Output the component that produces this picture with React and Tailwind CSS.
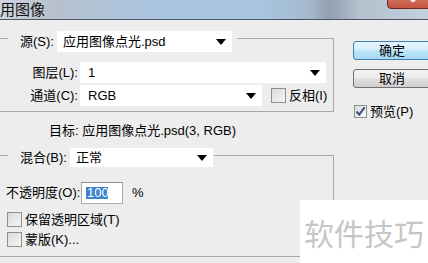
import React from "react";

function Arrow() {
  return (
    <svg width="10" height="6" viewBox="0 0 10 6" className="shrink-0">
      <path d="M0 0 L10 0 L5 6 Z" fill="#000" />
    </svg>
  );
}

function Dropdown({ value, className }) {
  return (
    <div className={"bg-white flex items-center justify-between pl-[6px] pr-[6px] text-[13px] leading-[16px] text-black " + className}>
      <span>{value}</span>
      <Arrow />
    </div>
  );
}

function Box({ className = "" }) {
  return (
    <div className={"w-[15px] h-[15px] border border-[#8e8f8f] bg-[linear-gradient(135deg,#d9d9d9,#f7f7f7)] shrink-0 " + className} />
  );
}

export default function App() {
  return (
    <div className="w-[428px] h-[263px] overflow-hidden relative bg-[#ededed] text-black font-['Liberation_Sans','Noto_Sans_CJK_SC',sans-serif]">
      {/* title bar */}
      <div className="relative h-[20px] border-b border-[#4a5566] bg-[linear-gradient(90deg,#cdd6df_0%,#b7c0cc_12%,#b2c3d6_22%,#a9c5e2_40%,#a7c4e1_62%,#a6b9cc_72%,#929fae_77%,#b3c1cf_84%,#c3d0dd_100%)]">
        <div className="text-[15px] leading-[17px] pt-[1px] text-[#111]">用图像</div>
        <div className="absolute left-[387px] top-[-8px] w-[46px] h-[17px] rounded-b-[4px] border border-[#6e2a22] bg-[linear-gradient(180deg,#d7826f,#c4533f)] overflow-hidden">
          <svg width="46" height="17" viewBox="0 0 46 17" className="block">
            <path d="M17 -2 L25 8 M33 -2 L25 8" stroke="#fff" strokeWidth="3" />
          </svg>
        </div>
      </div>

      <div className="flex">
        {/* left column */}
        <div className="w-[334px] flex flex-col">
          {/* group 1 */}
          <div className="mt-[18px] h-[74px] w-[334px] border border-l-0 border-[#a7a7a7] flex flex-col">
            <div className="-mt-[8px] ml-[8px] w-[229px] h-[21px] bg-[#ededed] flex items-center pl-[12px]">
              <span className="text-[13px] leading-[16px] w-[37px]">源(S):</span>
              <Dropdown value="应用图像点光.psd" className="w-[175px] h-[21px]" />
            </div>
            <div className="mt-[10px] flex items-center h-[21px]">
              <span className="w-[80px] text-right pr-[2px] text-[13px] leading-[16px]">图层(L):</span>
              <Dropdown value="1" className="w-[246px] h-[21px] pl-[8px]" />
            </div>
            <div className="mt-[2px] flex items-center h-[21px]">
              <span className="w-[80px] text-right pr-[2px] text-[13px] leading-[16px]">通道(C):</span>
              <Dropdown value="RGB" className="w-[182px] h-[21px] pl-[8px]" />
              <Box className="ml-[9px]" />
              <span className="ml-[3px] text-[13px] leading-[16px]">反相(I)</span>
            </div>
          </div>

          {/* target */}
          <div className="mt-[11px] pl-[49px] text-[13px] leading-[16px] h-[16px]">目标: 应用图像点光.psd(3, RGB)</div>

          {/* group 2 */}
          <div className="mt-[16px] h-[102px] w-[334px] border border-l-0 border-[#a7a7a7] flex flex-col">
            <div className="-mt-[8px] ml-[8px] w-[206px] h-[19px] bg-[#ededed] flex items-center pl-[12px]">
              <span className="text-[13px] leading-[16px] w-[50px]">混合(B):</span>
              <Dropdown value="正常" className="w-[143px] h-[19px]" />
            </div>
            <div className="mt-[15px] flex items-center h-[22px]">
              <span className="pl-[6px] w-[81px] text-[13px] leading-[16px]">不透明度(O):</span>
              <div className="w-[42px] h-[22px] border border-[#abadb3] border-t-[#8c8f98] bg-white flex items-center pl-[4px]">
                <span className="bg-[#3c83d0] text-white text-[13px] leading-[12px] px-[1px] py-[0px] w-[22px]">100</span>
              </div>
              <span className="ml-[9px] text-[13px] leading-[16px]">%</span>
            </div>
            <div className="mt-[8px] flex items-center h-[15px] pl-[7px]">
              <Box />
              <span className="ml-[3px] text-[13px] leading-[16px]">保留透明区域(T)</span>
            </div>
            <div className="mt-[5px] flex items-center h-[15px] pl-[7px]">
              <Box />
              <span className="ml-[3px] text-[13px] leading-[16px]">蒙版(K)...</span>
            </div>
          </div>
        </div>

        {/* right column */}
        <div className="ml-[19px] flex flex-col">
          <div className="mt-[21px] w-[78px] h-[19px] rounded-[3px] border border-[#3c7fb1] bg-[linear-gradient(180deg,#e5f4fc_0%,#d6eefb_45%,#b9e3fa_55%,#a6d8f3_100%)] flex items-center justify-center text-[13px] leading-[16px]">
            确定
          </div>
          <div className="mt-[9px] w-[78px] h-[19px] rounded-[3px] border border-[#707070] bg-[linear-gradient(180deg,#f3f3f3_0%,#ebebeb_45%,#dddddd_55%,#cfcfcf_100%)] flex items-center justify-center text-[13px] leading-[16px]">
            取消
          </div>
          <div className="mt-[17px] flex items-center h-[13px] pl-[1px]">
            <div className="w-[13px] h-[13px] border border-[#8e8f8f] bg-[linear-gradient(135deg,#dcdcdc,#f8f8f8)] flex items-center justify-center">
              <svg width="11" height="11" viewBox="0 0 11 11">
                <path d="M1.5 5.5 L4.2 8.6 L9.6 1.4" stroke="#3b4f8c" strokeWidth="2" fill="none" />
              </svg>
            </div>
            <span className="ml-[3px] text-[13px] leading-[16px]">预览(P)</span>
          </div>
        </div>
      </div>

      {/* watermark */}
      <div className="absolute left-[300px] top-[200px] w-[128px] h-[63px] bg-white flex items-center justify-center">
        <span className="text-[30px] leading-[32px] text-[#c6c6c6] font-['Noto_Sans_CJK_SC',sans-serif] tracking-[0px]">软件技巧</span>
      </div>
    </div>
  );
}
